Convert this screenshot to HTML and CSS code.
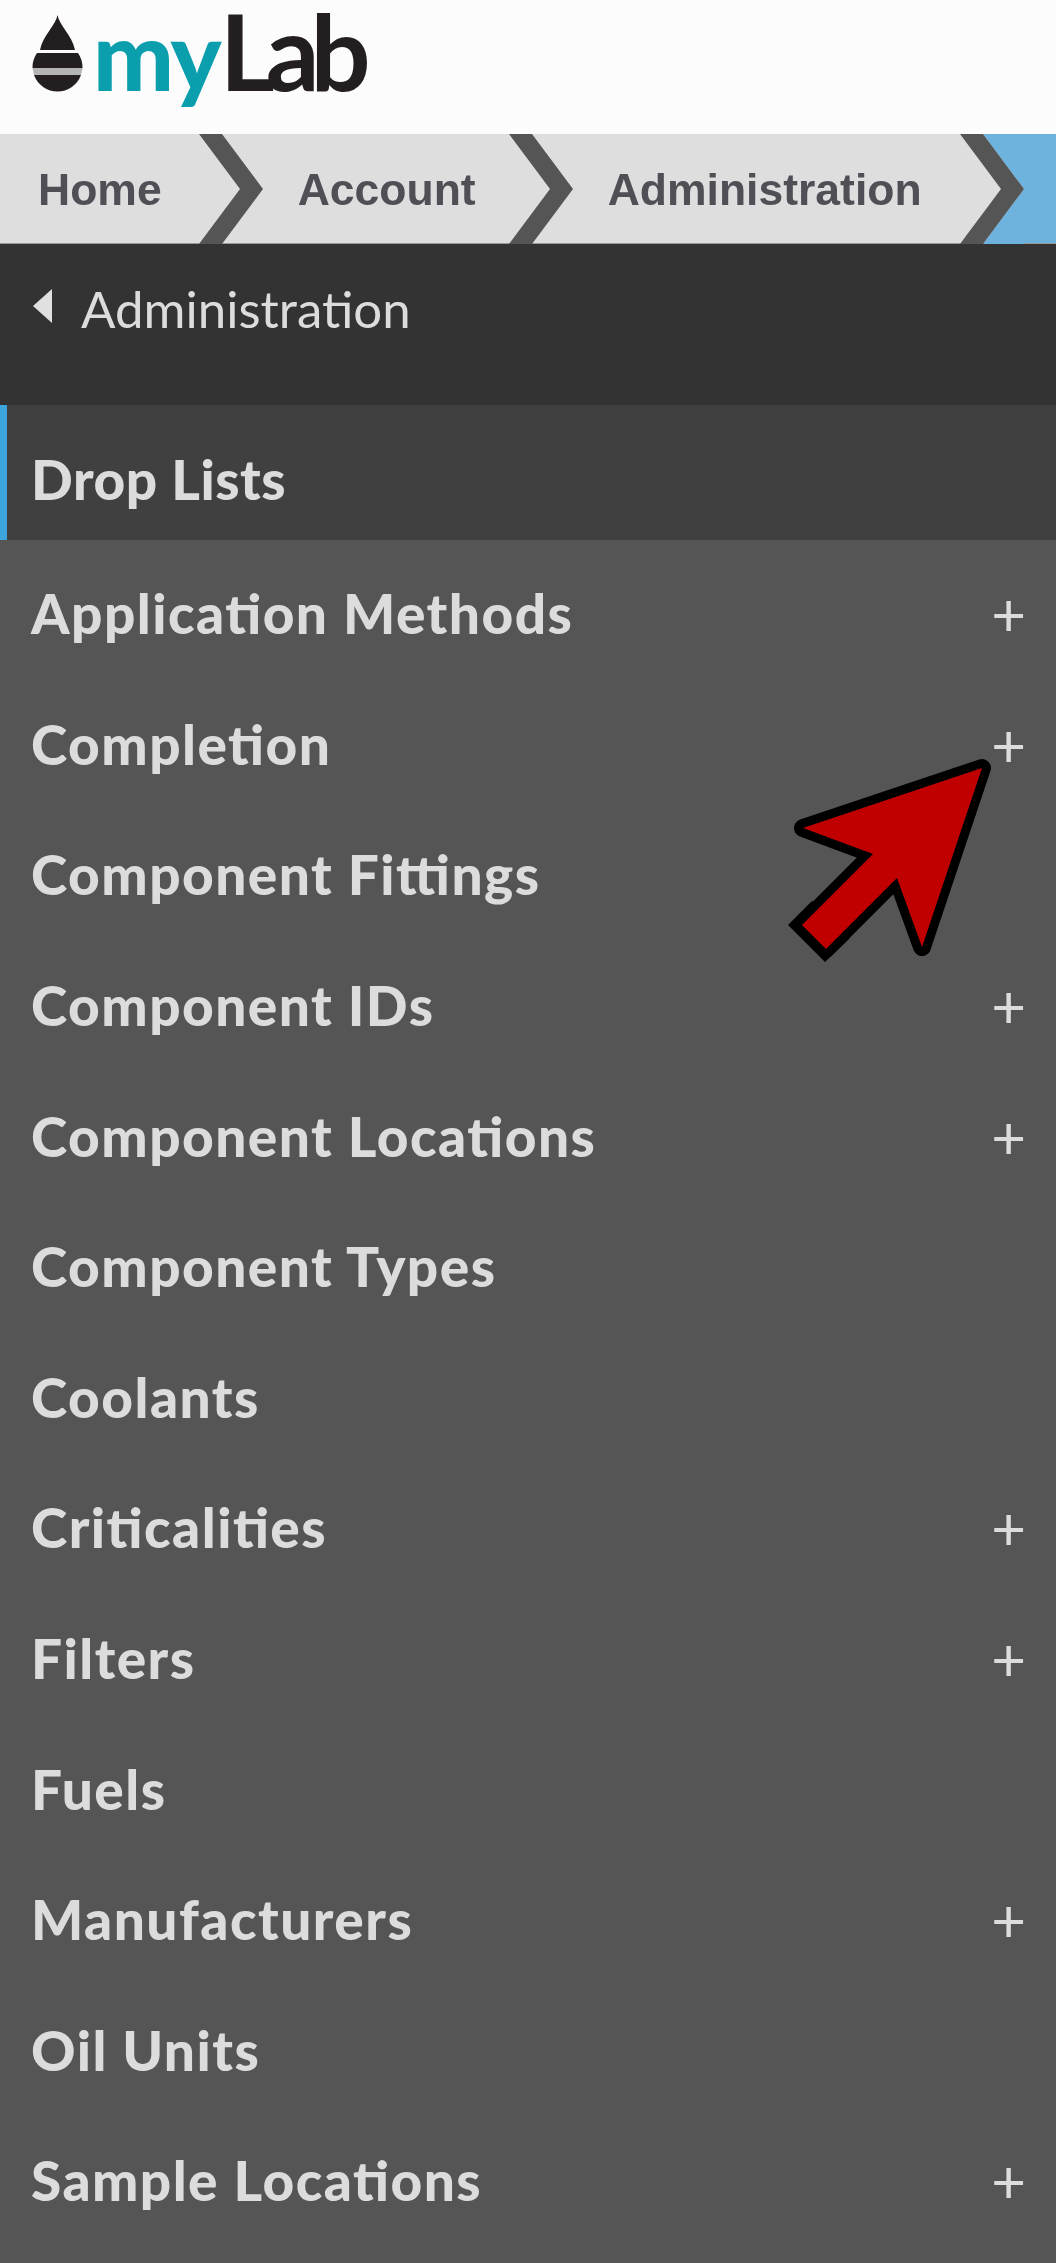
FILE: index.html
```html
<!DOCTYPE html>
<html lang="en">
<head>
<meta charset="utf-8">
<title>myLab</title>
<link rel="stylesheet" href="styles.css">
</head>
<body>
<div class="page">
  <header class="brand">
    <svg class="drop" viewBox="0 0 51 77" aria-hidden="true">
      <path class="drop-dark" d="M25.500 0 C27 10 40 20 43 35 H8 C11 20 24 10 25.500 0 Z"/>
      <path class="drop-dark" d="M5 38 H46 A25 25 0 0 1 50.500 53 H0.500 A25 25 0 0 1 5 38 Z"/>
      <path class="drop-stripe" d="M0.500 53 H50.500 L49 60 H2 Z"/>
      <path class="drop-dark" d="M2 60 H49 A25 25 0 0 1 2 60 Z"/>
    </svg>
    <div class="wordmark"><span class="word-my">my</span><span class="word-lab">Lab</span></div>
  </header>
  <nav class="crumbs">
    <span class="crumb crumb-first">Home</span>
    <svg class="chev" viewBox="0 0 64 110" aria-hidden="true"><path class="chev-mark" d="M0 0 H23 L64 55 L23 110 H0 L41 55 Z"/></svg>
    <span class="crumb crumb-middle">Account</span>
    <svg class="chev" viewBox="0 0 64 110" aria-hidden="true"><path class="chev-mark" d="M0 0 H23 L64 55 L23 110 H0 L41 55 Z"/></svg>
    <span class="crumb crumb-last">Administration</span>
    <svg class="chev" viewBox="0 0 64 110" aria-hidden="true"><path class="chev-fill" d="M23 0 H64 V110 H23 L64 55 Z"/><path class="chev-mark" d="M0 0 H23 L64 55 L23 110 H0 L41 55 Z"/></svg>
    <span class="crumb-end"></span>
  </nav>
  <div class="back"><span class="back-arrow"></span><span>Administration</span></div>
  <div class="section-title">Drop Lists</div>
  <ul class="menu">
    <li class="row"><span>Application Methods</span><span class="plus">+</span></li>
    <li class="row"><span>Completion</span><span class="plus">+</span></li>
    <li class="row"><span>Component Fittings</span></li>
    <li class="row"><span>Component IDs</span><span class="plus">+</span></li>
    <li class="row"><span>Component Locations</span><span class="plus">+</span></li>
    <li class="row"><span>Component Types</span></li>
    <li class="row"><span>Coolants</span></li>
    <li class="row"><span>Criticalities</span><span class="plus">+</span></li>
    <li class="row"><span>Filters</span><span class="plus">+</span></li>
    <li class="row"><span>Fuels</span></li>
    <li class="row"><span>Manufacturers</span><span class="plus">+</span></li>
    <li class="row"><span>Oil Units</span></li>
    <li class="row"><span>Sample Locations</span><span class="plus">+</span></li>
  </ul>
  <svg class="arrow" viewBox="0 0 220 220" aria-hidden="true">
    <path class="arrow-tail" d="M8 175 L45 212 L70 188 L32 151 Z"/>
    <path class="arrow-outline" d="M202 18 L23 78 L93 104 L22 175 L46 199 L117 128 L142 197 Z"/>
    <path class="arrow-fill" d="M202 18 L23 78 L93 104 L22 175 L46 199 L117 128 L142 197 Z"/>
  </svg>
</div>
</body>
</html>
```
FILE: styles.css
```css
* { box-sizing: border-box; }
html, body { margin: 0; padding: 0; }
body { background: #555; font-family: "Lato", "Liberation Sans", sans-serif; }
.page { position: relative; width: 1056px; height: 2263px; overflow: hidden; background: #555; filter: blur(0.6px); }
.brand { height: 134px; background: #fcfcfc; display: flex; align-items: flex-start; padding-left: 32px; }
.drop { width: 51px; height: 77px; flex: none; margin-top: 15px; margin-right: 10px; }
.drop-dark { fill: #231f20; }
.drop-stripe { fill: #b4b4b4; }
.wordmark { font-family: "Lato", sans-serif; line-height: 0.96; white-space: nowrap; display: flex; align-items: baseline; }
.word-my { color: #0b9fae; font-size: 96px; font-weight: 900; letter-spacing: -2px; }
.word-lab { color: #231f20; font-size: 106px; font-weight: 700; letter-spacing: -9px; }
.crumbs { height: 110px; background: #dedede; display: flex; align-items: center; border-bottom: 1px solid #999; }
.crumb { font-family: "Liberation Sans", Arial, sans-serif; font-weight: 700; font-size: 44.5px; color: #4f4f55; padding: 2px 36px 0 35px; white-space: nowrap; }
.crumb-first { padding-left: 38px; padding-right: 37px; }
.crumb-middle { padding-right: 33px; }
.crumb-last { padding-right: 38px; }
.chev { width: 64px; height: 110px; flex: none; }
.chev-mark { fill: #555; }
.chev-fill { fill: #6db3dd; }
.crumb-end { flex: 1; align-self: stretch; background: #6db3dd; }
.back { height: 161px; background: #333; color: #dcdcdc; display: flex; align-items: flex-start; padding: 35px 0 0 33px; font-size: 51px; line-height: 60px; gap: 29px; }
.back-arrow { width: 0; height: 0; margin-top: 10px; border-style: solid; border-width: 17px 19px 17px 0; border-color: transparent #e0e0e0 transparent transparent; }
.section-title { height: 135px; background: #404040; border-left: 7px solid #3ba5dc; padding: 12px 0 0 24px; color: #dcdcdc; font-weight: 900; font-size: 55px; letter-spacing: 0.5px; font-feature-settings: "liga" 1; display: flex; align-items: center; }
.menu { list-style: none; margin: 0; padding: 0; }
.row { height: 130.6px; padding: 16px 30px 0 31px; color: #dcdcdc; font-weight: 900; font-size: 55px; letter-spacing: 1.45px; font-feature-settings: "liga" 1; display: flex; align-items: center; justify-content: space-between; }
.plus { font-weight: 400; font-size: 60px; line-height: 1; letter-spacing: 0; }
.arrow { position: absolute; left: 780px; top: 750px; width: 220px; height: 220px; }
.arrow-tail { fill: #000; }
.arrow-outline { fill: #000; stroke: #000; stroke-width: 18; stroke-linejoin: round; }
.arrow-fill { fill: #c00000; }
```
